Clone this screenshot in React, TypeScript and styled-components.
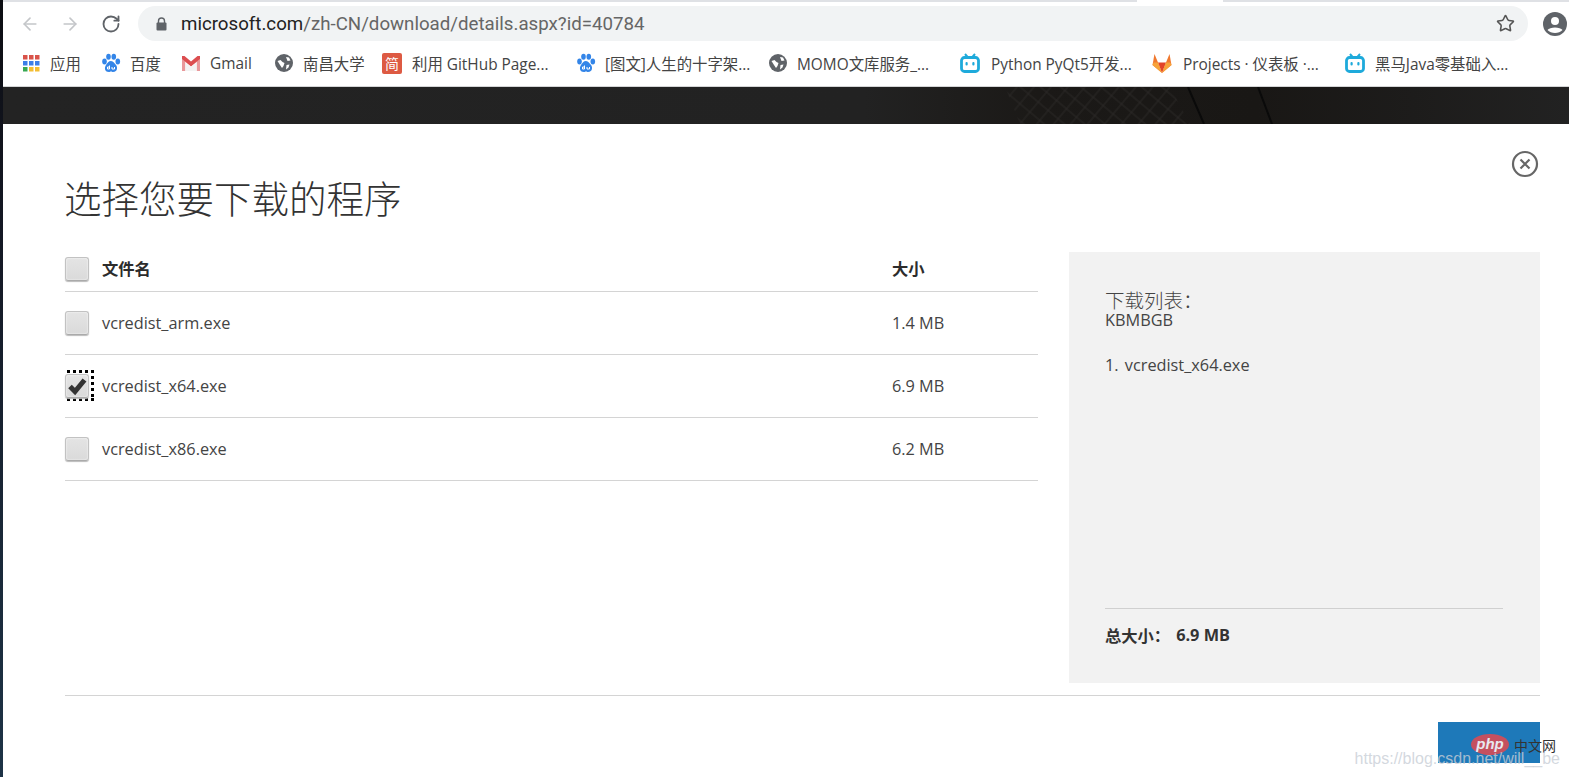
import React from "react";
import styled, { createGlobalStyle } from "styled-components";
import { ArrowLeft, ArrowRight, RotateCw, Star } from "lucide-react";

const Global = createGlobalStyle`
  html, body { margin: 0; padding: 0; background: #fff; overflow: hidden; }
  * { box-sizing: border-box; }
`;
const CJK = `"Noto Sans CJK SC", sans-serif`;
const UI = `"Open Sans", "Noto Sans CJK SC", sans-serif`;

const Screen = styled.div`
  position: relative;
  width: 1569px;
  height: 777px;
  display: flex;
  overflow: hidden;
  background: #fff;
`;
const DesktopEdge = styled.div`
  flex: 0 0 3px;
  background: linear-gradient(180deg, #0c0d12 0%, #141824 30%, #182433 60%, #1d3346 100%);
`;
const Browser = styled.div`
  flex: 1;
  min-width: 0;
  display: flex;
  flex-direction: column;
`;
const TabStrip = styled.div`
  flex: 0 0 2px;
  background: linear-gradient(90deg, #dfe1e5 0 1134px, #fff 1134px 1220px, #dfe1e5 1220px);
`;
const Toolbar = styled.div`
  flex: 0 0 42px;
  display: flex;
  align-items: center;
  padding: 1px 0 0 17px;
  background: #fff;
`;
const NavButton = styled.div<{ $color: string; $gap: number }>`
  flex: 0 0 20px;
  display: flex;
  margin-right: ${(p) => p.$gap}px;
  color: ${(p) => p.$color};
`;
const Omnibox = styled.div`
  flex: 0 0 1390px;
  height: 35px;
  margin-left: 17px;
  display: flex;
  align-items: center;
  padding: 0 13px 0 18px;
  border-radius: 18px;
  background: #f1f3f4;
  font: 18.7px Roboto, sans-serif;
  color: #666;
`;
const Lock = styled.svg`
  flex: 0 0 11px;
  height: 14px;
  margin-right: 14px;
`;
const Host = styled.span`
  color: #222;
`;
const Url = styled.span`
  flex: 1;
  white-space: nowrap;
`;
const Avatar = styled.svg`
  flex: 0 0 24px;
  height: 24px;
  margin-left: 15px;
`;
const Bookmarks = styled.div`
  flex: 0 0 43px;
  display: flex;
  align-items: center;
  padding: 0 0 4px 18px;
  background: #fff;
  border-bottom: 1px solid #d4d5d6;
  font: 15.4px ${UI};
  color: #444;
`;
const Bookmark = styled.div<{ $width: number; $gap: number }>`
  flex: 0 0 ${(p) => p.$width}px;
  display: flex;
  align-items: center;
  gap: ${(p) => p.$gap}px;
  white-space: nowrap;
`;
const Favicon = styled.svg`
  flex: 0 0 20px;
  height: 20px;
`;
const JianIcon = styled.span`
  flex: 0 0 20px;
  height: 21px;
  border-radius: 2px;
  background: #dd5a43;
  color: #fff;
  font: 14px/21px ${CJK};
  text-align: center;
`;
const Hero = styled.div`
  position: relative;
  flex: 0 0 37px;
  background: linear-gradient(90deg, #232323 0, #222 55%, #1b1917 66%, #191715 80%, #1d1c1b 90%, #222 100%);
  overflow: hidden;
`;
const HeroTexture = styled.svg`
  position: absolute;
  left: 997px;
  top: 0;
  width: 280px;
  height: 37px;
`;
const Dialog = styled.div`
  position: relative;
  flex: 1;
  display: flex;
  flex-direction: column;
  padding: 0 29px 0 62px;
  background: #fff;
  color: #333;
`;
const CloseButton = styled.svg`
  position: absolute;
  top: 26px;
  right: 30px;
  width: 28px;
  height: 28px;
`;
const Title = styled.h1`
  margin: 46px 0 0 -1px;
  height: 82px;
  font: 300 37.5px/54px ${CJK};
  color: #333;
`;
const Columns = styled.div`
  flex: 0 0 431px;
  display: flex;
  justify-content: space-between;
`;
const FileTable = styled.div`
  flex: 0 0 973px;
  display: flex;
  flex-direction: column;
`;
const Row = styled.div<{ $header?: boolean }>`
  flex: 0 0 ${(p) => (p.$header ? 40 : 63)}px;
  display: flex;
  align-items: center;
  padding-bottom: ${(p) => (p.$header ? 6 : 0)}px;
  border-bottom: 1px solid #d4d4d4;
  font: ${(p) => (p.$header ? "bold" : "normal")} 16.3px/22px ${UI};
  color: ${(p) => (p.$header ? "#2c2c2c" : "#444")};
`;
const CheckWrap = styled.div`
  position: relative;
  flex: 0 0 37px;
  height: 24px;
  display: flex;
`;
const Check = styled.div`
  position: relative;
  width: 24px;
  height: 24px;
  border: 1px solid #c2c2c2;
  border-bottom-color: #aaa;
  border-radius: 3px;
  background: linear-gradient(180deg, #e4e4e4, #dadada);
  box-shadow: inset 0 0 2px #fff, 0 1px 1px #bbb;
`;
const Focus = styled.div`
  position: absolute;
  left: 2px;
  top: -4px;
  width: 27px;
  height: 31px;
  background:
    repeating-linear-gradient(90deg, #000 0 3px, transparent 3px 6px) top left / 100% 3px no-repeat,
    repeating-linear-gradient(90deg, #000 0 3px, transparent 3px 6px) bottom left / 100% 3px no-repeat,
    repeating-linear-gradient(180deg, #000 0 3px, transparent 3px 6px) top right / 3px 100% no-repeat;
`;
const Tick = styled.svg`
  position: absolute;
  left: 1px;
  top: 1px;
  width: 20px;
  height: 20px;
`;
const FileName = styled.div`
  flex: 1;
`;
const FileSize = styled.div`
  flex: 0 0 146px;
`;
const Panel = styled.aside`
  flex: 0 0 471px;
  display: flex;
  flex-direction: column;
  padding: 37px 37px 0 36px;
  background: #f2f2f2;
  color: #444;
`;
const PanelTitle = styled.div`
  height: 22px;
  font: 300 19.500px/22px ${CJK};
  color: #444;
`;
const Kb = styled.div`
  font: 16.3px/18px ${UI};
`;
const DownloadList = styled.ol`
  flex: 1;
  margin: 25px 0 0;
  padding: 0;
  list-style: none;
  font: 16.3px/22px ${UI};
  word-spacing: 2px;
`;
const Total = styled.div`
  flex: 0 0 75px;
  display: flex;
  align-items: center;
  gap: 6px;
  padding-bottom: 23px;
  border-top: 1px solid #d0d0d0;
  font: bold 16.3px ${UI};
  color: #333;
`;
const Footer = styled.div`
  flex: 1;
  margin-top: 12px;
  padding-top: 26px;
  display: flex;
  justify-content: flex-end;
  border-top: 1px solid #d4d4d4;
`;
const NextButton = styled.div`
  width: 102px;
  height: 41px;
  background: #1e79b9;
`;
const PhpBadge = styled.div`
  position: absolute;
  left: 1471px;
  top: 734px;
  width: 38px;
  height: 21px;
  border-radius: 50%;
  background: #c5505f;
  color: #e8e8f0;
  font: italic bold 15px/19px "Liberation Sans", sans-serif;
  text-align: center;
`;
const PhpLabel = styled.div`
  position: absolute;
  left: 1514px;
  top: 736px;
  font: 14px/18px ${CJK};
  color: #333;
`;
const Watermark = styled.div`
  position: absolute;
  right: 9px;
  top: 749px;
  font: 16px/20px "Liberation Sans", sans-serif;
  color: rgba(200, 206, 214, 0.8);
  white-space: nowrap;
`;

const Globe = () => (
  <Favicon viewBox="0 0 20 20">
    <circle cx="10" cy="10" r="9" fill="#5f6368" />
    <path d="M3.500 8l3-1 2 2 2 1-1 3-1.500 2-2-3zM12 4l3 .5 1.500 3-3 .5zM12.500 12l3-.5-1 3-2.500 2z" fill="#fff" />
  </Favicon>
);
const Baidu = () => (
  <Favicon viewBox="0 0 20 20">
    <g fill="#3385e8">
      <ellipse cx="3.500" cy="8.500" rx="2.300" ry="3" />
      <ellipse cx="7.500" cy="3.800" rx="2.300" ry="3" />
      <ellipse cx="12.800" cy="3.800" rx="2.300" ry="3" />
      <ellipse cx="16.800" cy="8.500" rx="2.300" ry="3" />
      <path d="M10 8c2.500 0 3.500 2.500 5 4s2 7-3 7c-1 0-1-.5-2-.5s-1 .5-2 .5c-5 0-4.500-5-3-7s2.500-4 5-4z" />
    </g>
    <path d="M8.500 12.500v3.500H6.500v-2h2M11 14v2h2.500v-2" fill="none" stroke="#fff" strokeWidth="1" />
  </Favicon>
);
const Gmail = () => (
  <Favicon viewBox="0 0 20 20">
    <path d="M4.300 18V8.500L1 5.500V18z" fill="#e2757a" opacity=".75" />
    <path d="M15.700 18V8.500L19 5.500V18z" fill="#e2757a" opacity=".75" />
    <path d="M1 3h2.500L10 8.500 16.500 3H19v3l-9 7.500L1 6z" fill="#dc4e50" />
    <path d="M4.500 9.500L10 14l5.500-4.500V18h-11z" fill="#f3f3f3" />
  </Favicon>
);
const Apps = () => {
  const colors = ["#d9534a", "#d9534a", "#d9534a", "#3c7ee8", "#3c7ee8", "#3c7ee8", "#37a853", "#f3bd32", "#f3bd32"];
  return (
    <Favicon viewBox="0 0 20 20">
      {colors.map((c, i) => (
        <rect key={i} x={2 + (i % 3) * 6} y={2 + Math.floor(i / 3) * 6} width="4.500" height="4.500" fill={c} />
      ))}
    </Favicon>
  );
};
const Bili = () => (
  <Favicon viewBox="0 0 20 20">
    <path d="M5 1l3 3.500M15 1l-3 3.500" stroke="#1eaadb" strokeWidth="2" />
    <rect x="1.500" y="4.500" width="17" height="14" rx="3" fill="#fff" stroke="#1eaadb" strokeWidth="2.800" />
    <rect x="5.500" y="9" width="2.200" height="3.500" rx="1" fill="#1eaadb" />
    <rect x="12.300" y="9" width="2.200" height="3.500" rx="1" fill="#1eaadb" />
  </Favicon>
);
const Gitlab = () => (
  <Favicon viewBox="0 0 20 20">
    <path d="M10 20L.5 12 2.500 1 6 9.500z" fill="#f0782e" />
    <path d="M10 20l9.500-8-2-11L14 9.500z" fill="#f0782e" />
    <path d="M10 20L6 9.500h8z" fill="#e24329" />
    <path d="M10 20L.5 12l1.200-2.500H6zM10 20l9.500-8-1.200-2.500H14z" fill="#f7a33a" />
  </Favicon>
);

const bookmarks: [number, number, React.ReactNode, string][] = [
  [80, 9, <Apps />, "应用"],
  [80, 9, <Baidu />, "百度"],
  [93, 9, <Gmail />, "Gmail"],
  [108, 9, <Globe />, "南昌大学"],
  [194, 10, <JianIcon>简</JianIcon>, "利用 GitHub Page..."],
  [192, 9, <Baidu />, "[图文]人生的十字架..."],
  [192, 9, <Globe />, "MOMO文库服务_..."],
  [192, 11, <Bili />, "Python PyQt5开发..."],
  [193, 11, <Gitlab />, "Projects · 仪表板 ·..."],
  [180, 10, <Bili />, "黑马Java零基础入..."],
];

const files = [
  { name: "vcredist_arm.exe", size: "1.4 MB" },
  { name: "vcredist_x64.exe", size: "6.9 MB", checked: true },
  { name: "vcredist_x86.exe", size: "6.2 MB" },
];

export default function App() {
  return (
    <Screen>
      <Global />
      <DesktopEdge />
      <Browser>
        <TabStrip />
        <Toolbar>
          <NavButton $color="#c4c6c9" $gap={20}><ArrowLeft size={20} strokeWidth={2} /></NavButton>
          <NavButton $color="#c4c6c9" $gap={21}><ArrowRight size={20} strokeWidth={2} /></NavButton>
          <NavButton $color="#5f6368" $gap={0}><RotateCw size={20} strokeWidth={2.2} /></NavButton>
          <Omnibox>
            <Lock viewBox="0 0 11 14">
              <path d="M2.500 6V4a3 3 0 0 1 6 0v2" fill="none" stroke="#5f6368" strokeWidth="1.400" />
              <rect x="0.500" y="5.500" width="10" height="8" rx="1" fill="#5f6368" />
            </Lock>
            <Url><Host>microsoft.com</Host>/zh-CN/download/details.aspx?id=40784</Url>
            <Star size={19} color="#555" strokeWidth={2} />
          </Omnibox>
          <Avatar viewBox="0 0 24 24">
            <circle cx="12" cy="12" r="12" fill="#5f6368" />
            <circle cx="12" cy="9" r="4" fill="#fff" />
            <path d="M4.500 18c2-3.500 13-3.500 15 0-3.500 4-11.500 4-15 0z" fill="#fff" />
          </Avatar>
        </Toolbar>
        <Bookmarks>
          {bookmarks.map(([w, g, icon, label]) => (
            <Bookmark key={label} $width={w} $gap={g}>{icon}<span>{label}</span></Bookmark>
          ))}
        </Bookmarks>
        <Hero>
          <HeroTexture viewBox="0 0 280 37">
            <defs>
              <pattern id="diamond" width="13" height="13" patternUnits="userSpaceOnUse" patternTransform="rotate(40)">
                <rect x="0" y="0" width="13" height="13" fill="none" stroke="#2a2826" strokeWidth="1" />
              </pattern>
            </defs>
            <path d="M5 0h165l20 37H20z" fill="url(#diamond)" />
            <path d="M188 0l16 37M258 0l14 37" stroke="#0a0a0a" strokeWidth="2" />
          </HeroTexture>
        </Hero>
        <Dialog>
          <CloseButton viewBox="0 0 28 28">
            <circle cx="14" cy="14" r="12" fill="none" stroke="#666" strokeWidth="2.200" />
            <path d="M9.500 9.500l9 9M18.500 9.500l-9 9" stroke="#666" strokeWidth="2.200" />
          </CloseButton>
          <Title>选择您要下载的程序</Title>
          <Columns>
            <FileTable>
              <Row $header>
                <CheckWrap><Check /></CheckWrap>
                <FileName>文件名</FileName>
                <FileSize>大小</FileSize>
              </Row>
              {files.map((f) => (
                <Row key={f.name}>
                  <CheckWrap>
                    {f.checked && <Focus />}
                    <Check>
                      {f.checked && (
                        <Tick viewBox="0 0 20 20">
                          <path d="M3 10.500l5 5L17.500 4" fill="none" stroke="#333" strokeWidth="5" />
                        </Tick>
                      )}
                    </Check>
                  </CheckWrap>
                  <FileName>{f.name}</FileName>
                  <FileSize>{f.size}</FileSize>
                </Row>
              ))}
            </FileTable>
            <Panel>
              <PanelTitle>下载列表：</PanelTitle>
              <Kb>KBMBGB</Kb>
              <DownloadList><li>1. vcredist_x64.exe</li></DownloadList>
              <Total><span>总大小：</span><span>6.9 MB</span></Total>
            </Panel>
          </Columns>
          <Footer><NextButton /></Footer>
        </Dialog>
      </Browser>
      <PhpBadge>php</PhpBadge>
      <PhpLabel>中文网</PhpLabel>
      <Watermark>https://blog.csdn.net/will__be</Watermark>
    </Screen>
  );
}
